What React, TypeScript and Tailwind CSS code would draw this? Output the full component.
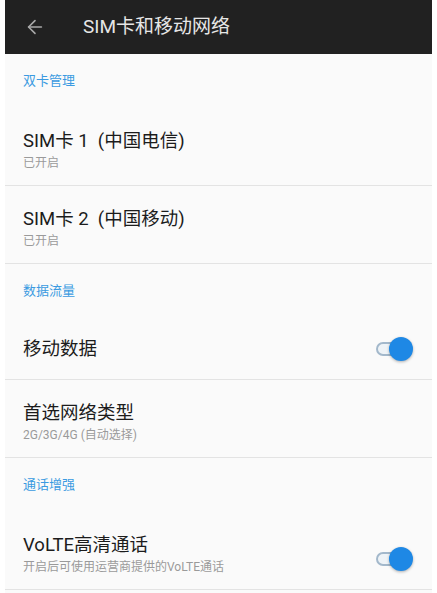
import { ArrowLeft } from 'lucide-react';

const font = { fontFamily: 'Roboto, "Noto Sans CJK SC", sans-serif' };

function SectionHeader({ label }: { label: string }) {
  return (
    <div className="h-[54px] flex items-center px-[18px]">
      <span className="text-[13px] text-[#3b9ae1]">{label}</span>
    </div>
  );
}

function Toggle() {
  return (
    <div className="relative w-[37px] h-[24px]">
      <div className="absolute left-0 top-[5px] w-[32px] h-[14px] rounded-full border-2 border-[#a3b8cb] bg-[#eef3f7]" />
      <div className="absolute right-0 top-0 w-[24px] h-[24px] rounded-full bg-[#1e88e5] shadow-[0_1px_3px_rgba(0,0,0,0.3)]" />
    </div>
  );
}

function Row({
  title,
  sub,
  toggle,
}: {
  title: string;
  sub?: string;
  toggle?: boolean;
}) {
  return (
    <div
      className={`flex border-b border-[#e3e3e3] px-[18px] ${
        sub ? 'h-[78px] pt-[21px]' : 'h-[62px] items-center'
      }`}
    >
      <div className="flex-1 flex flex-col">
        <span className="text-[18.5px] leading-[24px] text-[#1c1c1c] whitespace-pre">{title}</span>
        {sub && (
          <span className="text-[12px] leading-[16px] mt-[2px] text-[#9a9a9a]">{sub}</span>
        )}
      </div>
      {toggle && (
        <div className={`mr-[1px] ${sub ? 'mt-[14px]' : ''}`}>
          <Toggle />
        </div>
      )}
    </div>
  );
}

export default function App() {
  return (
    <div className="w-[437px] h-[593px] bg-white overflow-hidden" style={font}>
      <div className="mx-[5px] h-full bg-[#fafafa]">
        <div className="h-[54px] bg-[#212121] flex items-center">
          <ArrowLeft className="ml-[19px] w-[22px] h-[22px] text-[#a8a8a8]" strokeWidth={1.75} />
          <span className="ml-[37px] text-[19px] text-[#e6e6e6]">SIM卡和移动网络</span>
        </div>

        <SectionHeader label="双卡管理" />
        <Row title="SIM卡 1  (中国电信)" sub="已开启" />
        <Row title="SIM卡 2  (中国移动)" sub="已开启" />

        <SectionHeader label="数据流量" />
        <Row title="移动数据" toggle />
        <Row title="首选网络类型" sub="2G/3G/4G (自动选择)" />

        <SectionHeader label="通话增强" />
        <Row title="VoLTE高清通话" sub="开启后可使用运营商提供的VoLTE通话" toggle />
      </div>
    </div>
  );
}
